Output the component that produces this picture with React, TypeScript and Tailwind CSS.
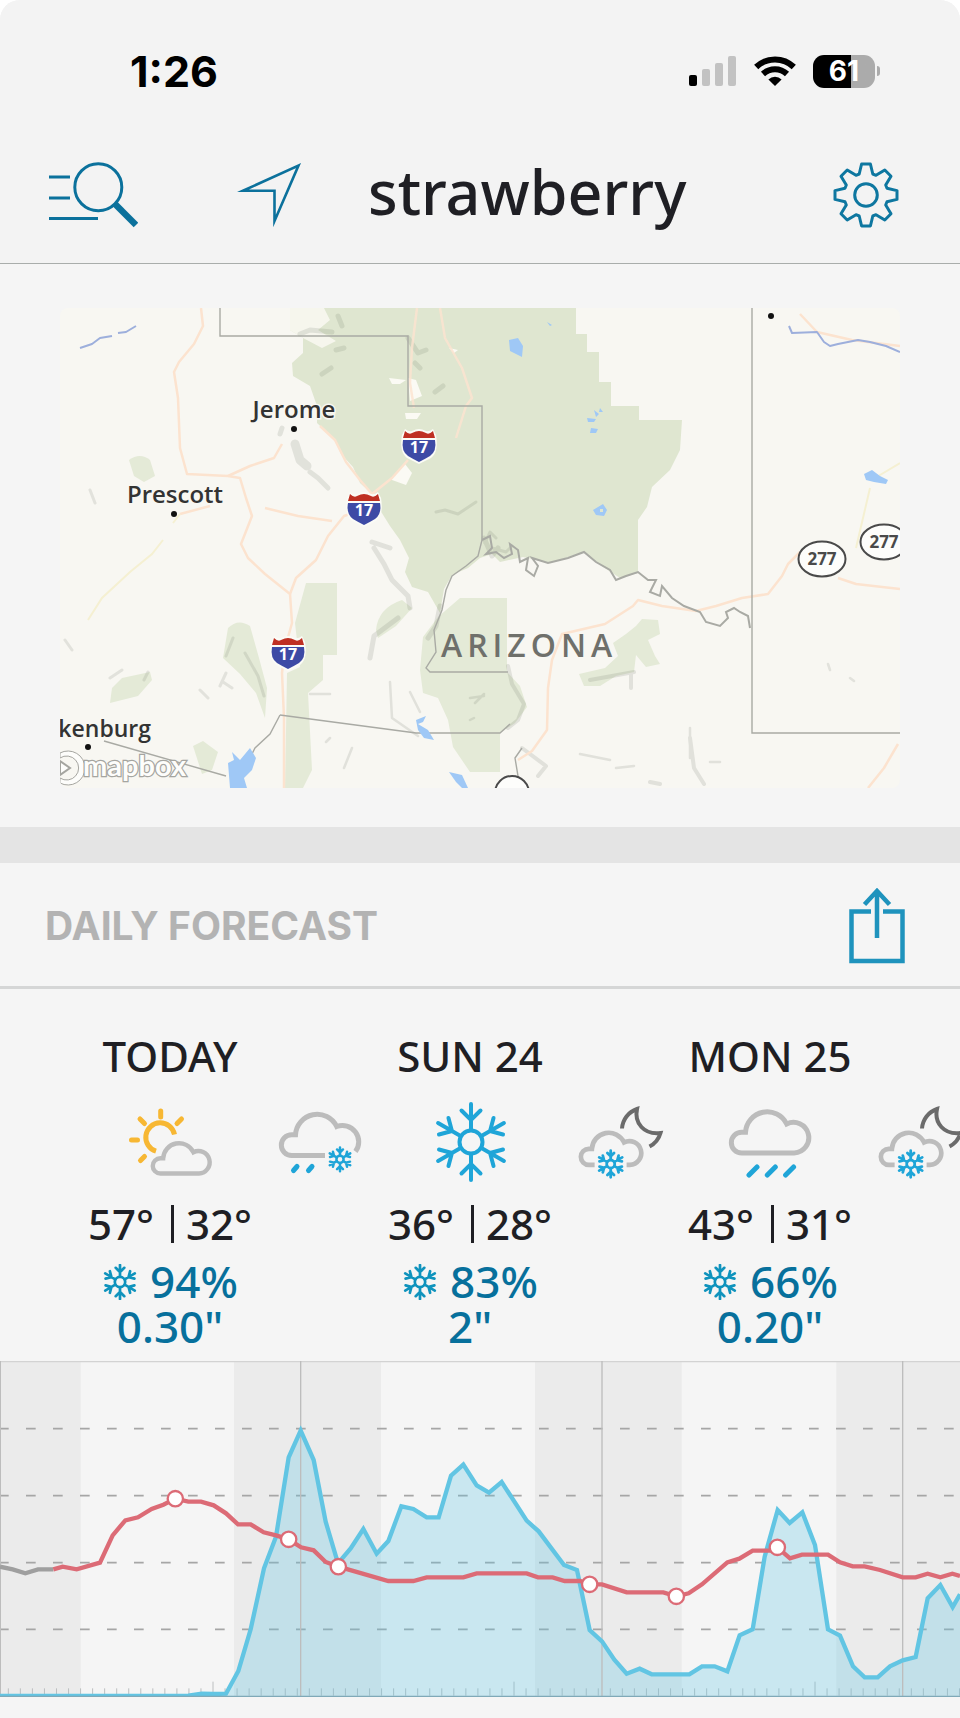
import React from 'react';

type Point = [number, number];
type Condition = 'partly-cloudy' | 'rain-snow' | 'snow' | 'night-snow' | 'rain';

interface Day {
  label: string;
  high: number;
  low: number;
  chance: number;
  amount: string;
  day: Condition;
  night: Condition;
}

const DAYS: Day[] = [
  { label: 'TODAY', high: 57, low: 32, chance: 94, amount: '0.30"', day: 'partly-cloudy', night: 'rain-snow' },
  { label: 'SUN 24', high: 36, low: 28, chance: 83, amount: '2"', day: 'snow', night: 'night-snow' },
  { label: 'MON 25', high: 43, low: 31, chance: 66, amount: '0.20"', day: 'rain', night: 'night-snow' },
];

// chart units: 2880 x 1008, three per pixel on a 960px wide screen
const PRECIP: Point[] = [
  [0, 1005], [565, 1004], [605, 998], [640, 999], [678, 998], [715, 930], [752, 805], [792, 622],
  [828, 527], [866, 289], [902, 209], [941, 297], [977, 482], [1014, 607], [1052, 562], [1090, 504],
  [1130, 578], [1165, 540], [1204, 436], [1240, 444], [1280, 469], [1316, 469], [1353, 344], [1390, 311],
  [1430, 373], [1467, 395], [1505, 363], [1580, 479], [1616, 511], [1692, 612], [1731, 627], [1769, 807],
  [1806, 841], [1843, 896], [1880, 938], [1919, 923], [1955, 940], [2068, 940], [2106, 916], [2144, 916],
  [2182, 931], [2219, 823], [2258, 805], [2294, 587], [2333, 447], [2369, 486], [2407, 454], [2445, 552],
  [2484, 805], [2520, 824], [2559, 916], [2594, 949], [2633, 949], [2670, 916], [2708, 898], [2747, 888],
  [2783, 712], [2821, 672], [2858, 738], [2880, 700],
];

const PAST_TEMPS: Point[] = [[0, 617], [38, 625], [76, 637], [114, 625], [160, 625]];

const TEMPS: Point[] = [
  [160, 625], [188, 617], [230, 625], [300, 605], [338, 523], [376, 478], [414, 469], [455, 444],
  [490, 431], [526, 413], [565, 422], [603, 422], [641, 433], [678, 457], [714, 490], [752, 490],
  [791, 514], [828, 523], [866, 535], [903, 559], [941, 568], [977, 603], [1015, 617], [1165, 660],
  [1240, 660], [1280, 649], [1390, 649], [1430, 637], [1580, 637], [1614, 649], [1658, 649], [1694, 660],
  [1740, 660], [1769, 670], [1806, 670], [1880, 694], [1990, 694], [2029, 706], [2066, 697], [2106, 670],
  [2182, 604], [2218, 593], [2258, 569], [2310, 569], [2332, 559], [2370, 592], [2406, 581], [2484, 581],
  [2520, 604], [2558, 616], [2594, 616], [2640, 627], [2708, 649], [2747, 649], [2783, 638], [2821, 649],
  [2857, 638], [2880, 645],
];

const EXTREMES: Point[] = [[526, 413], [866, 535], [1015, 617], [1769, 670], [2029, 706], [2332, 559]];

const NIGHTS: Point[] = [[0, 242], [702, 1143], [1605, 2045], [2509, 2880]];

const toPoints = (pts: Point[]) => pts.map((p) => p.join(',')).join(' ');

function Flake({ cx, cy, size, stroke, color }: { cx: number; cy: number; size: number; stroke: number; color: string }) {
  return (
    <g transform={`translate(${cx} ${cy}) scale(${size / 40})`} stroke={color} strokeWidth={stroke} strokeLinecap="round" fill="none">
      <circle r="11.5" />
      {[0, 60, 120, 180, 240, 300].map((a) => (
        <path key={a} d="M0 -12V-38M-9.5 -31.5L0 -22L9.5 -31.5" transform={`rotate(${a})`} />
      ))}
    </g>
  );
}

const CLOUD = 'M16.7 58A10.3 10.3 0 0 1 16.7 37.3H20.5A21.7 21.7 0 0 1 61.7 29A15.3 15.3 0 1 1 69.2 58Z';

function WeatherIcon({ type }: { type: Condition }) {
  return (
    <svg viewBox="0 0 90 90" className="w-[90px] h-[90px]" fill="none" role="img" aria-label={type}>
      {type === 'partly-cloudy' && (
        <>
          <g stroke="#f7b733" strokeWidth="5">
            <path d="M49.5 39.5A14.5 14.5 0 1 0 31 56.2" />
            <path
              strokeLinecap="round"
              d="M35.7 16V22M15 24L19.5 28.5M56.5 24L52 28.5M6.5 45H12.5M15.5 65.5L19.5 61.5"
            />
          </g>
          <path d={CLOUD} transform="translate(23.1 35.9) scale(.735)" stroke="#bcbcbc" strokeWidth="6" />
        </>
      )}
      {type === 'rain-snow' && (
        <>
          <path
            d="M50 60.5H16.7A10.3 10.3 0 0 1 16.7 39.8H20.5A21.7 21.7 0 0 1 61.7 31.5A16.3 16.3 0 0 1 80.5 56.5"
            stroke="#bcbcbc"
            strokeWidth="5"
          />
          <path d="M18.5 75.5L22 71.5M33.5 75.5L37 71.5" stroke="#1fa5d8" strokeWidth="5" strokeLinecap="round" />
          <Flake cx={65} cy={64.3} size={12.5} stroke={8} color="#1fa5d8" />
        </>
      )}
      {type === 'snow' && <Flake cx={46} cy={47} size={40} stroke={4} color="#1fa5d8" />}
      {type === 'rain' && (
        <>
          <path d={CLOUD} stroke="#bcbcbc" strokeWidth="5" />
          <path
            d="M24 80L32 72M42.3 80L50.3 72M60.6 80L68.6 72"
            stroke="#1fa5d8"
            strokeWidth="5"
            strokeLinecap="round"
          />
        </>
      )}
      {type === 'night-snow' && (
        <>
          <path
            d="M24 58H16.7A10.3 10.3 0 0 1 16.7 37.3H20.5A21.7 21.7 0 0 1 61.7 29A15.3 15.3 0 1 1 69.2 58H65"
            transform="translate(.9 24.7) scale(.78)"
            stroke="#bcbcbc"
            strokeWidth="6"
          />
          <path
            d="M47 33.5A22 22 0 0 1 62 14C59 28 69 40 85.5 38A22 22 0 0 1 74.5 51.5"
            stroke="#6b6b6b"
            strokeWidth="4"
          />
          <Flake cx={35.7} cy={69} size={14} stroke={8} color="#1fa5d8" />
        </>
      )}
    </svg>
  );
}

function StatusBar() {
  return (
    <div className="flex items-center justify-between h-[142px] pl-[130px] pr-20 text-black">
      <time className="text-[43px] leading-none font-bold">1:26</time>
      <div className="flex items-center">
        <svg viewBox="0 0 48 30" className="w-12 h-[30px]" aria-label="Signal">
          <rect x="0" y="19" width="8" height="11" rx="2" fill="#000" />
          <rect x="13" y="13" width="8" height="17" rx="2" fill="#c2c2c2" />
          <rect x="26" y="7" width="8" height="23" rx="2" fill="#c2c2c2" />
          <rect x="39" y="0" width="8" height="30" rx="2" fill="#c2c2c2" />
        </svg>
        <svg viewBox="0 0 42 30" className="w-[42px] h-[30px] ml-[17px]" fill="none" stroke="#000" aria-label="Wi-Fi">
          <path d="M2.2 11A27 27 0 0 1 39.8 11" strokeWidth="6" />
          <path d="M9 18A17.5 17.5 0 0 1 33 18" strokeWidth="6" />
          <path d="M14.4 23.4A9.5 9.5 0 0 1 27.6 23.4L21 30Z" fill="#000" stroke="none" />
        </svg>
        <div className="flex items-center justify-center w-[62px] h-[33px] ml-[17px] rounded-[11px] bg-linear-to-r from-black from-62% to-[#ababab] to-62%">
          <span className="text-[28px] leading-none font-bold text-white">61</span>
        </div>
        <span className="w-[3px] h-2.5 ml-0.5 rounded-r-full bg-[#ababab]" />
      </div>
    </div>
  );
}

function GearIcon() {
  const teeth = [0, 45, 90, 135, 180, 225, 270, 315].flatMap((deg) => {
    const a = (deg * Math.PI) / 180;
    const corners: Point[] = [[-6.8, -21], [-4.4, -31], [4.4, -31], [6.8, -21]];
    return corners.map(([x, y]): Point => [
      Math.round((x * Math.cos(a) - y * Math.sin(a)) * 10) / 10,
      Math.round((x * Math.sin(a) + y * Math.cos(a)) * 10) / 10,
    ]);
  });
  return (
    <svg viewBox="-33 -33 66 66" className="w-[66px] h-[66px]" fill="none" stroke="#0e77a0" strokeWidth="3" strokeLinejoin="round">
      <polygon points={toPoints(teeth)} />
      <circle r="11.3" />
    </svg>
  );
}

function NavBar() {
  return (
    <nav className="flex items-center h-[122px] pb-4 pl-12 pr-[61px] border-b border-[#a9adab]">
      <button type="button" aria-label="Search">
        <svg viewBox="0 0 90 66" className="w-[90px] h-[66px]" fill="none" stroke="#0b719c">
          <path d="M1 15H22M1 36H22M1 56.5H50" strokeWidth="3" />
          <circle cx="50.3" cy="25.3" r="23.5" strokeWidth="3" />
          <path d="M67 42L88 63" strokeWidth="6.5" />
        </svg>
      </button>
      <button type="button" aria-label="Current location" className="ml-[98px]">
        <svg viewBox="0 0 66 66" className="w-[66px] h-[66px]" fill="none" stroke="#0b719c" strokeWidth="2.6">
          <path d="M7 28.8L62.5 3.5L38.5 59V28.8Z" strokeMiterlimit="10" />
        </svg>
      </button>
      <h1 className="ml-[66px] pb-[6px] font-['Noto_Sans',sans-serif] text-[61px] leading-[70px] font-medium text-[#1f1f24]">strawberry</h1>
      <button type="button" aria-label="Settings" className="ml-auto">
        <GearIcon />
      </button>
    </nav>
  );
}

function Interstate({ x, y }: { x: number; y: number }) {
  return (
    <g transform={`translate(${x} ${y})`}>
      <path
        d="M-14 -17Q-10 -14 -7 -15Q-3 -17 0 -17Q3 -17 7 -15Q10 -14 14 -17L17 -11Q20 6 12 12Q6 15 0 18Q-6 15 -12 12Q-20 6 -17 -11Z"
        fill="#fbfbf6"
      />
      <path d="M-14 -15Q-10 -11 -7 -13Q-3 -15 0 -15Q3 -15 7 -13Q10 -11 14 -15L16 -8H-16Z" fill="#bf3023" />
      <path d="M-16 -6H16Q18 5 11 10Q6 13 0 16Q-6 13 -11 10Q-18 5 -16 -6Z" fill="#3d4aa5" />
      <text y="7" textAnchor="middle" fontSize="16" fontWeight="700" fill="#fff">17</text>
    </g>
  );
}

function StateRoute({ x, y, label }: { x: number; y: number; label: string }) {
  return (
    <g transform={`translate(${x} ${y})`}>
      <ellipse rx="23.5" ry="17.5" fill="#fdfdfb" stroke="#4a4a4a" strokeWidth="2" />
      <text y="6" textAnchor="middle" fontSize="17" fontWeight="700" fill="#4a4a4a">{label}</text>
    </g>
  );
}

function MapPreview() {
  return (
    <svg viewBox="0 0 840 480" className="block w-full h-auto rounded-lg bg-[#f8f7f2]" role="img" aria-label="Map of central Arizona">
      {/* national forests */}
      <g fill="#dfe6d0">
        <path d="M230 0V22L243 30V45L232 55L233 68L250 78L257 98V115L275 132L281 146L293 159L300 175L312 186L320 202L330 218L340 232L349 250L345 264L352 279L368 284L380 305L384 281L392 267L408 260L420 250L432 246L440 254L463 249L490 255L523 244L543 259L560 270L578 265V212L587 199L592 179L610 162L620 142L622 112H579V98H551V74H539V44H527V26H516V0Z" />
        <path d="M69 152Q80 144 90 152L95 168L84 174L74 168Z" opacity=".8" />
      </g>
      <g fill="#e4ead7">
        <path d="M400 290H447V364L460 378L467 399L455 415L440 425V464H410L393 439L388 412L378 390L363 385L360 362L363 329L378 309Z" />
        <path d="M246 275H277V347H263V372L248 385L252 462L243 480H225L227 365L240 359L235 315Z" />
        <path d="M168 320Q178 310 190 318L199 350L207 380L205 410L196 385L180 366L163 350Z" />
        <path d="M52 380L62 370L90 364L92 372L78 388L50 395Z" />
        <path d="M133 438L143 433L158 444L152 462L142 466Z" />
        <path d="M316 322Q318 300 342 292L352 300L336 318L318 330Z" />
        <path d="M553 335L566 326L576 318L582 311L598 312L600 326L588 332L595 348L600 356L586 359L576 347L574 364L556 368L540 378L524 378L519 366L545 360L558 348Z" />
      </g>
      <g fill="#fbfaf4">
        <path d="M230 0H264L270 12L258 22L276 33L262 40L243 30L230 22Z" opacity=".8" />
        <path d="M331 170L345 156L352 165L346 177L332 172Z" />
        <path d="M348 70L356 72L362 88L350 93ZM345 105H361L357 111H346ZM329 70L346 72L340 76H332ZM389 40L398 42L394 45Z" />
      </g>
      {/* relief */}
      <g fill="none" stroke="#6d7467" strokeLinecap="round" strokeLinejoin="round" opacity=".16">
        <path d="M278 8L282 18M272 24L250 22L240 26M276 42L284 40M262 66L271 60M348 30L358 45L366 42M355 55L360 60M375 84L383 78" strokeWidth="5" />
        <path d="M235 136L240 152L247 158" strokeWidth="9" />
        <path d="M250 164L258 170L262 174L268 180M222 120L220 126" strokeWidth="5" />
        <path d="M314 240L324 256L332 272L348 288L350 300M380 298L376 318L368 330M312 234L330 240M424 230L432 248L438 240M338 310L314 328L310 350" strokeWidth="5" />
        <path d="M173 330L166 348M185 345L198 368L204 388M88 364L84 372M50 370L62 362M5 332L12 342M35 195L30 182M140 382L148 390M166 365L160 378M163 374L172 380" strokeWidth="3" />
        <path d="M448 358L452 376L464 396L458 412L448 420M462 440L486 458L478 468M630 430L634 460L644 476M590 474L600 476M571 366V380M530 372L574 364" strokeWidth="4" />
        <path d="M270 430L266 434M292 440L284 460M270 386L250 386M330 374L332 410L358 428M350 384L360 404M410 390L424 388M415 395L424 386M414 410L410 412M520 446L550 452M556 460L574 458M630 420V450M768 356L770 362M790 370L794 373M650 454H660" strokeWidth="2.5" />
        <path d="M376 204L385 202L398 206L410 198L416 194M425 235L430 224L436 230M432 240L446 244L452 238" strokeWidth="3" />
      </g>
      {/* roads */}
      <g fill="none" stroke="#fce3cf" strokeWidth="2.5" strokeLinejoin="round">
        <path d="M141 0L143 18L134 36L119 54L114 64L118 90L120 140L127 166L168 168L180 170L186 190L192 208L181 236L188 250L205 266L230 286L232 315L225 340L222 365L224 410L224 480" />
        <path d="M230 286L236 270L256 252L268 228L284 208L304 201" />
        <path d="M168 168L190 158L214 150L222 136M120 206L150 198M205 200L238 208L272 213M260 118L275 132L286 154L300 172L312 186M312 186L332 170L348 152" />
        <path d="M357 0L352 40L350 75L354 100M380 0L385 30L402 60L412 90L406 98L396 130" opacity=".8" />
        <path d="M458 452L472 443L487 422L488 380L492 352L502 326L545 316L573 298L578 292L602 298L636 303L656 298L682 290L708 286L722 268L728 256L740 244M778 270L796 276L840 281M838 436L824 460L808 480" />
        <path d="M740 6L757 24L792 32L840 38" />
      </g>
      <path d="M103 232L92 246L70 264L42 290L28 312M113 215L120 206M810 180L796 240M840 155L815 170" fill="none" stroke="#f5f0d2" strokeWidth="2" />
      {/* county lines */}
      <g fill="none" stroke="#a9aaa4" strokeWidth="1.4">
        <path d="M160 0V28H348V98H422V232" />
        <path
          d="M422 232L430 228L432 240L426 246L436 244L444 250L452 246L450 236L458 242L460 254L468 250L466 262L474 268L478 258L472 250L488 255L508 250L524 244L536 254L550 262L556 272L566 268L578 264L588 272L596 272L590 284L600 288L602 278L612 290L624 298L640 304L646 314L660 318L668 310L666 304L674 300L680 304L688 308L690 320"
          strokeWidth="2"
        />
        <path d="M692 0V425H840" />
        <path d="M422 232L418 248L406 258L392 268L386 282L382 302L374 322L376 344L366 360L370 364H448M220 407L356 425H440L450 416" />
        <path d="M220 407L210 426L195 440L190 450M44 433L166 468M460 480L455 450L462 440" />
      </g>
      {/* water */}
      <g fill="#9fc8f6">
        <path d="M449 32L458 30L463 38L462 49L450 43Z" />
        <path d="M534 102L539 106L536 109ZM540 100L543 104L539 104ZM527 110L536 111L534 114H528ZM531 120L538 121L536 125H530ZM487 14L492 17L490 18Z" />
        <path d="M533 202L543 196L547 202L544 208L536 207ZM540 201L543 201V204H540Z" fillRule="evenodd" />
        <path d="M804 166L812 162L820 168L828 172L826 176L814 174L806 172Z" />
        <path d="M168 455L174 452L172 444L180 452L190 440L196 450L192 462L184 470L187 480H170Z" />
        <path d="M356 412L366 408L363 414L358 416L368 422L374 432L364 430L358 422Z" />
        <path d="M389 464L402 467L408 480H402L396 474Z" />
      </g>
      <g fill="none" stroke="#9dafdc" strokeWidth="2" strokeLinejoin="round">
        <path d="M20 40L32 36L40 30L52 28M58 25L66 24L76 18" />
        <path d="M729 18L732 25L757 24L764 34L770 38L778 36L788 34L798 32L810 34L826 38L840 44" />
      </g>

      <g fontFamily="'Open Sans', 'Noto Sans', sans-serif">
        <g fontSize="24" fontWeight="600" fill="#333" stroke="#f8f7f2" strokeWidth="3" paintOrder="stroke">
          <text x="234" y="110" textAnchor="middle">Jerome</text>
          <text x="115" y="195" textAnchor="middle">Prescott</text>
          <text x="91" y="429" textAnchor="end" fontSize="23">Wickenburg</text>
        </g>
        <g fill="#111">
          <circle cx="234" cy="121" r="3" />
          <circle cx="114" cy="206" r="3" />
          <circle cx="28" cy="439" r="3" />
          <circle cx="711" cy="8" r="3" />
        </g>
        <text x="381" y="349" fontSize="32" fontWeight="600" fill="#6f706b" className="tracking-[5px]">ARIZONA</text>
        <StateRoute x={762} y={251} label="277" />
        <StateRoute x={824} y={234} label="277" />
        <ellipse cx="452" cy="485" rx="17" ry="17" fill="#fdfdfb" stroke="#4a4a4a" strokeWidth="2" />
        <Interstate x={359} y={138} />
        <Interstate x={304} y={201} />
        <Interstate x={228} y={345} />
      </g>
      <g stroke="#a5a5a0" fill="#fdfdfb">
        <path d="M0 445A17 17 0 1 1 0 475L0 470A12 12 0 1 0 0 450Z" strokeWidth="1" />
        <path d="M0 453L10 460L0 467Z" strokeWidth="2" />
        <text x="23" y="468" fontFamily="Lato, sans-serif" fontSize="29" fontWeight="700" strokeWidth="2.5" paintOrder="stroke">mapbox</text>
      </g>
    </svg>
  );
}

function SectionHeader() {
  return (
    <div className="flex items-center justify-between h-[126px] pt-0.5 pl-[45px] pr-[55px] border-b-3 border-[#d5d6d6]">
      <h2 className="text-[39px] leading-none font-bold text-[#b3b3b3]">DAILY FORECAST</h2>
      <button type="button" aria-label="Share forecast">
        <svg viewBox="0 0 56 76" className="w-14 h-[76px]" fill="none" stroke="#1f93bd" strokeWidth="4.5">
          <path d="M22 23.5H2.5V73H53.5V23.5H34" />
          <path d="M28 50V3M15.5 16.5L28 3L40.5 16.5" />
        </svg>
      </button>
    </div>
  );
}

function DayColumn({ label, high, low, chance, amount, day, night }: Day) {
  return (
    <li className="w-[300px] shrink-0 text-center text-[#1f1f24]">
      <h3 className="leading-[48px]">{label}</h3>
      {/* night icon straddles the border with the next day */}
      <div className="flex items-center w-[300px] h-[120px] ml-[75px]">
        {[day, night].map((type) => (
          <div key={type} className="w-[150px] flex justify-center">
            <WeatherIcon type={type} />
          </div>
        ))}
      </div>
      <p className="flex justify-center leading-[48px]">
        <span>{high}°</span>
        <span className="self-center w-[3px] h-[38px] ml-[17px] mr-3 bg-[#1f1f24]" />
        <span>{low}°</span>
      </p>
      <div className="mt-[11px] text-[44px] leading-[45px] text-[#07709c]">
        <p className="flex items-center justify-center gap-3">
          <svg viewBox="-18 -18 36 36" className="w-9 h-9" aria-label="Snow">
            <Flake cx={0} cy={0} size={18} stroke={6} color="#0f93bd" />
          </svg>
          {chance}%
        </p>
        <p>{amount}</p>
      </div>
    </li>
  );
}

function ForecastChart() {
  return (
    <svg viewBox="0 0 2880 1008" className="block w-full h-auto" fill="none" role="img" aria-label="Temperature and precipitation">
      {NIGHTS.map(([from, to]) => (
        <rect key={from} x={from} y="0" width={to - from} height="1006" fill="#ebebeb" />
      ))}
      <path d="M0 2H2880" stroke="#d3d3d3" strokeWidth="4" />
      {[203, 404, 605, 805].map((y) => (
        <path key={y} d={`M-3 ${y}H2880`} stroke="#a6a6a6" strokeWidth="5" strokeDasharray="29 52" />
      ))}
      {Array.from({ length: 80 }, (_, i) => {
        const x = 25 + i * 36.12;
        return <path key={i} d={`M${x} ${i % 25 === 17 ? 962 : 982}V1004`} stroke="#bcbfc0" strokeWidth="3" />;
      })}
      <polygon points={`0,1006 ${toPoints(PRECIP)} 2880,1006`} fill="#5cc3e3" fillOpacity=".29" />
      <path d="M1 0V1006M902 0V1006M1806 0V1006M2708 0V1006" stroke="#bdbdbd" strokeWidth="4" />
      <polyline points={toPoints(PRECIP)} stroke="#62c5e3" strokeWidth="13" />
      <polyline points={toPoints(PAST_TEMPS)} stroke="#9f9f9f" strokeWidth="13" />
      <polyline points={toPoints(TEMPS)} stroke="#dc6b76" strokeWidth="13" />
      {EXTREMES.map(([x, y]) => (
        <circle key={x} cx={x} cy={y} r="23" fill="#fff" stroke="#dc6b76" strokeWidth="7" />
      ))}
      <path d="M0 1006H2880" stroke="#7fa9b8" strokeWidth="4" />
    </svg>
  );
}

export default function App() {
  return (
    <div className="bg-white font-[Inter,sans-serif]">
      <main className="min-h-screen overflow-hidden rounded-t-[20px] bg-[#f5f5f5]">
        <header className="bg-[#f3f3f3]">
          <StatusBar />
          <NavBar />
        </header>

        <section className="px-[60px] pt-11 pb-[39px]">
          <MapPreview />
        </section>

        <section className="border-t-36 border-[#e4e4e4]">
          <SectionHeader />
          <ul className="flex overflow-hidden pl-5 pt-[43px] pb-3 font-['Noto_Sans',sans-serif] text-[42px] font-medium">
            {DAYS.map((d) => (
              <DayColumn key={d.label} {...d} />
            ))}
          </ul>
          <ForecastChart />
        </section>
      </main>
    </div>
  );
}
